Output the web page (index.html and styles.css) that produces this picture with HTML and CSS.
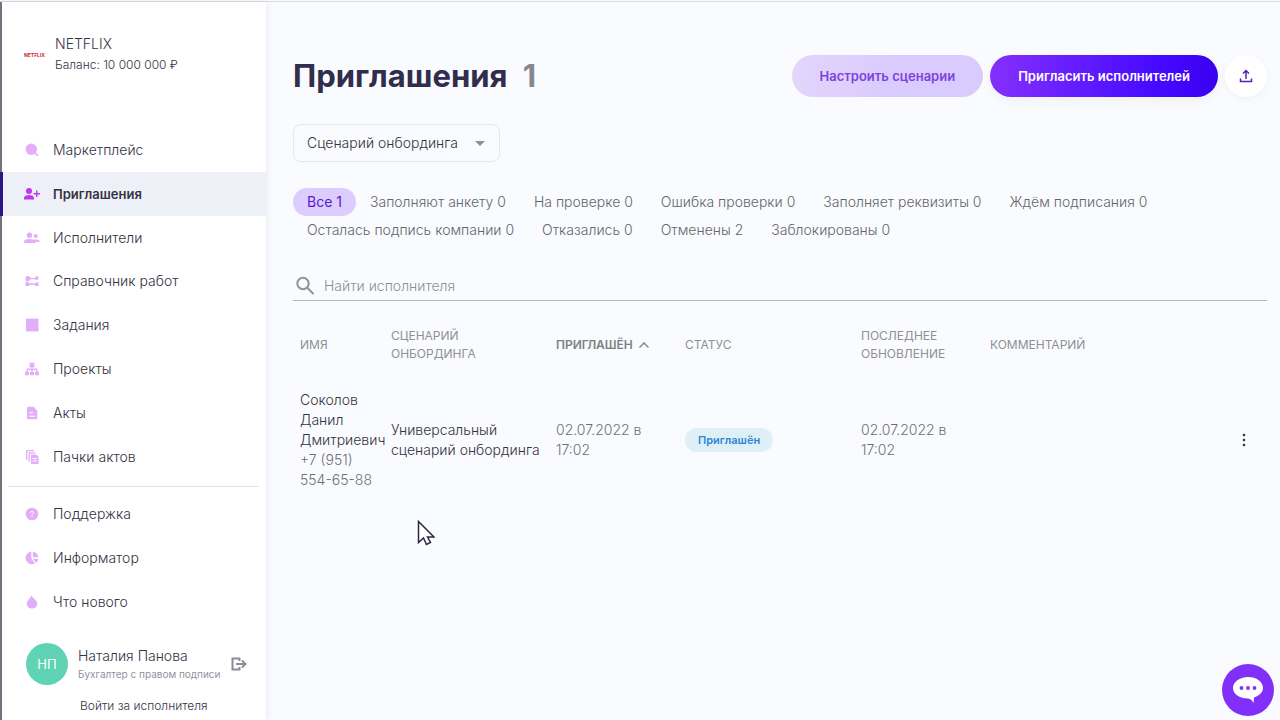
FILE: index.html
```html
<!DOCTYPE html>
<html lang="ru">
<head>
<meta charset="utf-8">
<title>Приглашения</title>
<link rel="stylesheet" href="styles.css">
</head>
<body>
<div class="app">
  <aside class="sidebar">
    <div class="company">
      <span class="company-logo">NETFLIX</span>
      <div>
        <div class="company-name">NETFLIX</div>
        <div class="company-balance">Баланс: 10 000 000 ₽</div>
      </div>
    </div>
    <nav class="menu">
      <a class="menu-item" href="#"><svg class="icon" viewBox="0 0 16 16"><circle cx="7.300" cy="7.300" r="5.700"/><path d="M10 11.300l1.300-1.300 3.200 3.200-1.100 1.100z"/></svg>Маркетплейс</a>
      <a class="menu-item menu-item-active" href="#"><svg class="icon" viewBox="0 0 16 16"><circle cx="5" cy="5" r="3"/><path d="M0 13.500V12C0 10 2.500 9 5 9s5 1 5 3v1.500zM12 4.500h1.400V7H16v1.400h-2.600V11H12V8.400H9.700V7H12z"/></svg>Приглашения</a>
      <a class="menu-item" href="#"><svg class="icon" viewBox="0 0 16 16"><circle cx="5.500" cy="5.200" r="2.700"/><circle cx="11.700" cy="6" r="2"/><path d="M0 13v-1.500C0 9.700 3 8.900 5.500 8.900c1.600 0 3 .3 4 .9.700-.3 1.500-.4 2.300-.4 2 0 4.200.7 4.200 2.400h-4.500V13z"/></svg>Исполнители</a>
      <a class="menu-item" href="#"><svg class="icon" viewBox="0 0 16 16"><circle cx="4" cy="5.600" r="2.500"/><path d="M5 4.900h6V3.500h3.500v3.300H11v-.6H5zM1.500 9.600H5v1h6v-1h3.500V13H11v-1.100H5V13H1.500zM2.500 7h1.300v4H2.500z"/></svg>Справочник работ</a>
      <a class="menu-item" href="#"><svg class="icon" viewBox="0 0 16 16"><path d="M2 1.600h12.500v12.800H2z"/></svg>Задания</a>
      <a class="menu-item" href="#"><svg class="icon" viewBox="0 0 16 16"><path d="M5.500 1.800h5v4.400H8.700v1.400h4.800v3.200H15v3.400h-4v-3.400h1V8.900H8.700v1.900H10v3.400H6v-3.400h1.300V8.900H4v1.900h1v3.400H1v-3.400h1.500V7.600h4.800V6.200H5.500z"/></svg>Проекты</a>
      <a class="menu-item" href="#"><svg class="icon" viewBox="0 0 16 16"><path fill-rule="evenodd" d="M4.500 1.700h5L13.200 5.400v7.400c0 1-.6 1.500-1.500 1.500H4.500c-1 0-1.500-.5-1.500-1.500V3.200c0-1 .5-1.500 1.500-1.500zM5.200 7.200v1.100h4V7.200zm0 3.500v1.100h6v-1.100z"/></svg>Акты</a>
      <a class="menu-item" href="#"><svg class="icon" viewBox="0 0 16 16"><path fill-rule="evenodd" d="M2 1h8v1.300H3.300V11H2zM4.500 3.200h7v1.300H5.800v8.200H4.500zM7 5.400h5l2.500 2.400V15H7zM8.500 9v1h4.300V9zm0 2.400v1h4.300v-1z"/></svg>Пачки актов</a>
      <hr class="menu-divider">
      <a class="menu-item" href="#"><svg class="icon" viewBox="0 0 16 16"><circle cx="8" cy="8" r="6.300"/><path class="icon-cut" d="M6.500 6.700c.1-1.900 3.100-1.700 3 0C9.400 7.800 8 7.800 8 9M8 10v1"/></svg>Поддержка</a>
      <a class="menu-item" href="#"><svg class="icon" viewBox="0 0 16 16"><path d="M7.300 1.700v6.600l3.600 5.200A6.300 6.300 0 1 1 7.300 1.700zM8.800 1.700a6.200 6.200 0 0 1 5.500 5.500H8.800zM9 8.700h5.300a6 6 0 0 1-2.200 4.200z"/></svg>Информатор</a>
      <a class="menu-item" href="#"><svg class="icon" viewBox="0 0 16 16"><path d="M7.500 1.200c.6 2.600 5.700 4.500 5.700 8.500a5.200 4.900 0 0 1-10.400 0c0-3.500 3.500-5.200 4.700-8.500z"/></svg>Что нового</a>
    </nav>
    <div class="account">
      <span class="avatar">НП</span>
      <div class="account-text">
        <div class="account-name">Наталия Панова</div>
        <div class="account-role">Бухгалтер с правом подписи</div>
      </div>
      <button class="logout" type="button" aria-label="Выйти"><svg viewBox="0 0 16 14"><path d="M8.500 4V1.500h-7v11h7V10M5 7h9M11 3.500L14.500 7 11 10.500"/></svg></button>
    </div>
    <a class="switch-account" href="#">Войти за исполнителя</a>
  </aside>

  <main class="main">
    <header class="header">
      <h1 class="title">Приглашения <span class="title-count">1</span></h1>
      <button class="button button-light" type="button">Настроить сценарии</button>
      <button class="button button-primary" type="button">Пригласить исполнителей</button>
      <button class="button-round" type="button" aria-label="Выгрузить"><svg viewBox="0 0 14 14"><path d="M7 10V2M4 4.500L7 1.500l3 3M1.500 9.500v3h11v-3"/></svg></button>
    </header>

    <div class="select-wrap">
      <select class="select" aria-label="Сценарий онбординга"><option>Сценарий онбординга</option></select>
    </div>

    <div class="filters">
      <button class="filter filter-active" type="button">Все 1</button>
      <button class="filter" type="button">Заполняют анкету 0</button>
      <button class="filter" type="button">На проверке 0</button>
      <button class="filter" type="button">Ошибка проверки 0</button>
      <button class="filter" type="button">Заполняет реквизиты 0</button>
      <button class="filter" type="button">Ждём подписания 0</button>
      <button class="filter" type="button">Осталась подпись компании 0</button>
      <button class="filter" type="button">Отказались 0</button>
      <button class="filter" type="button">Отменены 2</button>
      <button class="filter" type="button">Заблокированы 0</button>
    </div>

    <label class="search">
      <svg class="search-icon" viewBox="0 0 20 20"><circle cx="8" cy="7.500" r="5.700"/><path d="M12 11.500l6.500 6.500"/></svg>
      <input class="search-input" type="text" placeholder="Найти исполнителя" aria-label="Найти исполнителя">
    </label>

    <table class="table">
      <colgroup><col class="col-name"><col class="col-scenario"><col class="col-date"><col class="col-status"><col class="col-date"><col><col class="col-actions"></colgroup>
      <thead>
        <tr>
          <th>Имя</th>
          <th>Сценарий<br>онбординга</th>
          <th class="sorted">Приглашён <svg class="sort-icon" viewBox="0 0 12 8"><path d="M1.500 6.500L6 2l4.500 4.500"/></svg></th>
          <th>Статус</th>
          <th>Последнее обновление</th>
          <th>Комментарий</th>
          <th></th>
        </tr>
      </thead>
      <tbody>
        <tr>
          <td>Соколов Данил Дмитриевич <span class="phone">+7&nbsp;(951) 554-65-88</span></td>
          <td>Универсальный сценарий онбординга</td>
          <td class="date">02.07.2022 в<br>17:02</td>
          <td><span class="badge">Приглашён</span></td>
          <td class="date">02.07.2022 в<br>17:02</td>
          <td></td>
          <td><button class="more" type="button" aria-label="Действия"><svg viewBox="0 0 4 14"><circle cx="2" cy="2" r="1.300"/><circle cx="2" cy="7" r="1.300"/><circle cx="2" cy="12" r="1.300"/></svg></button></td>
        </tr>
      </tbody>
    </table>
  </main>
</div>

<button class="chat" type="button" aria-label="Чат"><svg viewBox="0 0 32 28"><path fill="#fff" d="M16 1c8.500 0 15 4.800 15 11 0 4-3.500 7.700-9 9.500l-.5 5.500c-1-2.300-2.800-4-5.500-4.500C7.500 22.500 1 18 1 12S7.500 1 16 1z"/><circle cx="9.500" cy="12" r="1.900"/><circle cx="16" cy="12" r="1.900"/><circle cx="22.500" cy="12" r="1.900"/></svg></button>
<svg class="cursor" viewBox="0 0 18 26"><path d="M1.500 1.500v21l5-4.500 3 6.500 4-2-3-5.500h6.500z"/></svg>
</body>
</html>
```
FILE: styles.css
```css
* { box-sizing: border-box; }

body {
  margin: 0;
  padding-top: 1px;
  background: #fafbfe;
  color: #343343;
  font-family: Inter, "Liberation Sans", sans-serif;
  font-size: 14px;
  font-weight: 300;
  line-height: 20px;
}

button {
  padding: 0;
  border: 0;
  background: none;
  font: inherit;
  color: inherit;
  cursor: pointer;
}

a { color: inherit; text-decoration: none; }

.app {
  display: flex;
  min-height: calc(100vh - 1px);
  border-top: 1px solid #d5dade;
}

/* Sidebar */
.sidebar {
  display: flex;
  flex-direction: column;
  flex: 0 0 266px;
  border-left: 2px solid #74727d;
  background: #fff;
  box-shadow: 2px 0 6px rgba(60, 90, 110, 0.08);
}

.company {
  display: flex;
  align-items: center;
  gap: 12px;
  height: 105px;
  margin-bottom: 21px;
  padding-left: 22px;
}

.company-logo {
  width: 19px;
  color: #d3202c;
  font-size: 5px;
  font-weight: 700;
  line-height: 6px;
}

.company-balance { font-size: 12px; line-height: 22px; }

.menu {
  display: flex;
  flex: 1;
  flex-direction: column;
}

.menu-item {
  display: flex;
  flex: 1;
  align-items: center;
  gap: 13px;
  padding-left: 22px;
}

.menu-item-active {
  margin-left: -2px;
  padding-left: 21px;
  border-left: 3px solid #2a1487;
  background: #eef0f8;
  font-size: 13px;
  font-weight: 600;
}

.menu-divider {
  width: auto;
  margin: 7px 7px 6px 6px;
  border: 0;
  border-top: 1px solid #e2e4e6;
}

.icon { width: 16px; height: 16px; fill: #e2aef7; }
.menu-item-active .icon { fill: #c036ef; }
.icon-cut { fill: none; stroke: #fff; stroke-width: 1; }

.account {
  display: flex;
  align-items: center;
  gap: 10px;
  margin-top: 19px;
  padding-left: 24px;
}

.avatar {
  width: 42px;
  height: 42px;
  border-radius: 50%;
  background: #60d3b5;
  color: #fff;
  font-size: 13px;
  font-weight: 400;
  line-height: 42px;
  text-align: center;
}

.account-role { color: #9092a0; font-size: 10px; font-weight: 400; line-height: 16px; }

.logout { width: 16px; height: 14px; }
.logout svg { display: block; fill: none; stroke: #8b8e96; stroke-width: 2; }

.switch-account {
  margin: 11px 0 4px;
  padding-left: 78px;
  font-size: 12px;
}

/* Content */
.main { flex: 1; min-width: 0; padding: 53px 13px 24px 27px; }

.header { display: flex; align-items: center; gap: 7px; }

.title {
  flex: 1;
  margin: 0;
  color: #302d4d;
  font-size: 31px;
  line-height: 40px;
}

.title-count { margin-left: 8px; color: #85868e; }

.button {
  height: 42px;
  padding: 0 28px;
  border-radius: 21px;
  font-size: 13px;
  font-weight: 600;
}

.button-light {
  background: linear-gradient(100deg, #e4d5fb, #dacbfe 50%, #dacbfe);
  color: #8042dc;
}

.button-primary {
  background: linear-gradient(90deg, #8430fc, #4409ff 75%, #3a00f0);
  box-shadow: 0 4px 10px rgba(50, 80, 90, 0.06);
  color: #fff;
}

.button-round {
  display: grid;
  place-items: center;
  width: 42px;
  height: 42px;
  border-radius: 50%;
  background: #fff;
  box-shadow: 0 2px 6px rgba(50, 80, 90, 0.06);
}

.button-round svg {
  width: 14px;
  height: 14px;
  fill: none;
  stroke: #5a20b0;
  stroke-width: 1.5;
}

.select-wrap {
  display: inline-grid;
  align-items: center;
  margin: 27px 0 26px;
}

.select-wrap::after {
  grid-area: 1 / 1;
  justify-self: end;
  margin-right: 15px;
  border: 5px solid transparent;
  border-top-color: #8e9097;
  border-bottom-width: 0;
  content: "";
  pointer-events: none;
}

.select {
  grid-area: 1 / 1;
  height: 38px;
  padding: 0 41px 0 13px;
  border: 1px solid #e4e7ec;
  border-radius: 8px;
  appearance: none;
  background: none;
  color: inherit;
  font: inherit;
}

.filters { display: flex; flex-wrap: wrap; }

.filter {
  height: 28px;
  padding: 0 14px;
  border-radius: 14px;
  color: #64666e;
}

.filter-active { background: #dccdfe; color: #571ad0; font-weight: 400; }

.search {
  display: flex;
  align-items: center;
  gap: 9px;
  height: 30px;
  margin-top: 27px;
  padding-left: 2px;
  border-bottom: 1px solid #b5b8bc;
}

.search-icon { width: 20px; height: 20px; fill: none; stroke: #8f9297; stroke-width: 2; }

.search-input {
  flex: 1;
  padding: 0;
  border: 0;
  outline: 0;
  background: none;
  font: inherit;
}

.search-input::placeholder { color: #8b9098; opacity: 1; }

/* Table */
.table {
  width: 100%;
  margin-top: 16px;
  border-collapse: collapse;
  table-layout: fixed;
}

.col-name { width: 91px; }
.col-scenario { width: 165px; }
.col-date { width: 129px; }
.col-status { width: 176px; }
.col-actions { width: 40px; }

.table th {
  height: 56px;
  padding: 0 0 0 7px;
  color: #8e9096;
  font-size: 12px;
  font-weight: 400;
  line-height: 18px;
  text-align: left;
  text-transform: uppercase;
}

.table .sorted { color: #7d7f86; font-weight: 600; }

.sort-icon { width: 12px; height: 8px; margin-left: 2px; fill: none; stroke: #8e9096; stroke-width: 1.6; }

.table td { height: 134px; padding: 0 0 0 7px; }

.phone, .table .date { color: #6d6f77; }

.badge {
  display: inline-block;
  padding: 0 13px;
  border-radius: 12px;
  background: #dfeff6;
  color: #2e86d6;
  font-size: 11px;
  font-weight: 600;
  line-height: 24px;
}

.more { display: block; width: 20px; height: 24px; }
.more svg { display: block; width: 4px; height: 14px; margin: 0 auto; fill: #33343c; }

/* Floating items */
.chat {
  position: fixed;
  right: 6px;
  bottom: 4px;
  display: grid;
  place-items: center;
  width: 52px;
  height: 52px;
  border-radius: 50%;
  background: #8130fa;
}

.chat svg { width: 32px; height: 28px; fill: #8130fa; }

.cursor {
  position: absolute;
  top: 520px;
  left: 417px;
  width: 18px;
  height: 26px;
  fill: #fff;
  stroke: #2b2842;
  stroke-width: 1.5;
}
```
